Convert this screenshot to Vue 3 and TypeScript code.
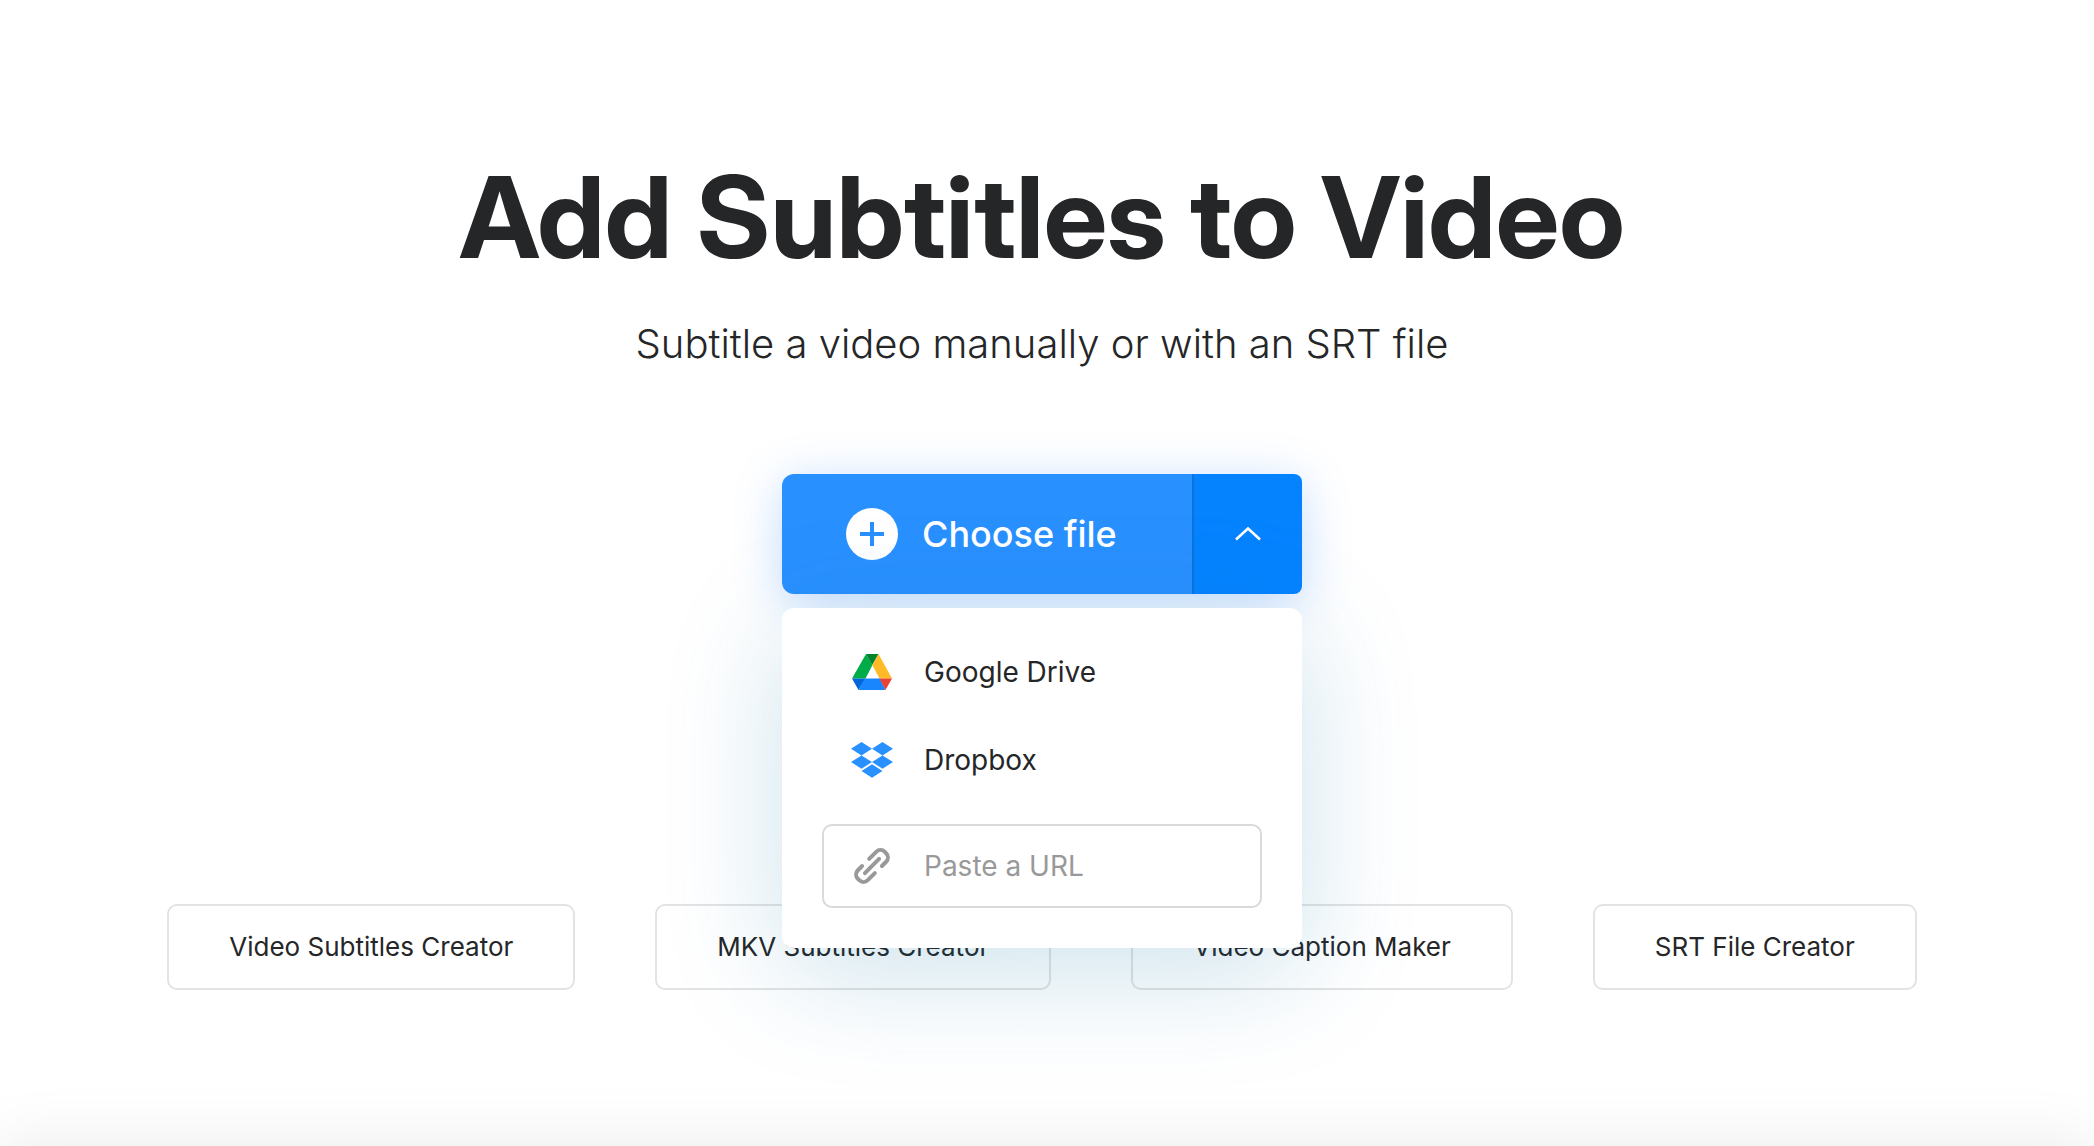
<script setup lang="ts">
import { ref } from 'vue'

const open = ref(true)
const url = ref('')
const related: string[] = [
  'Video Subtitles Creator',
  'MKV Subtitles Creator',
  'Video Caption Maker',
  'SRT File Creator',
]
</script>

<template>
  <main class="hero">
    <h1 class="title">Add Subtitles to Video</h1>
    <p class="subtitle">Subtitle a video manually or with an SRT file</p>

    <div class="picker">
      <div class="split">
        <button type="button" class="choose">
          <svg class="plus" viewBox="0 0 52 52" aria-hidden="true">
            <circle cx="26" cy="26" r="26" fill="#fff" />
            <path d="M26 14v24M14 26h24" stroke="#2990ff" stroke-width="4" />
          </svg>
          <span>Choose file</span>
        </button>
        <button
          type="button"
          class="toggle"
          aria-label="More sources"
          :aria-expanded="open"
          @click="open = !open"
        >
          <svg class="chevron" viewBox="0 0 28 16" aria-hidden="true">
            <path d="M2 13.500L14 2.500l12 11" fill="none" stroke="#fff" stroke-width="2.6" />
          </svg>
        </button>
      </div>

      <div v-if="open" class="menu">
        <button type="button" class="source">
          <svg class="icon" viewBox="0 0 42 36" aria-hidden="true">
            <path d="M15 0L1 24.500h13.500L21.500 11z" fill="#00ac47" />
            <path d="M15 0h12.500L21.300 11z" fill="#00832d" />
            <path d="M27.500 0L41 24.500H28.500L21.300 11z" fill="#ffba26" />
            <path d="M1 24.500h13.500L7.500 36z" fill="#0066da" />
            <path d="M14 24.500h15L34.500 36h-27z" fill="#1a86fd" />
            <path d="M28.500 24.500H41L34.500 36z" fill="#ea4335" />
          </svg>
          <span>Google Drive</span>
        </button>
        <button type="button" class="source">
          <svg class="icon" viewBox="0 0 42 36" aria-hidden="true">
            <path
              fill="#2990ff"
              d="M10.500 0L21 6.700 10.500 13.400 0 6.700zM31.500 0L42 6.700 31.500 13.400 21 6.700zM10.500 13.400L21 20.100 10.500 26.800 0 20.100zM31.500 13.400L42 20.100 31.500 26.800 21 20.100zM21 22.300L31.500 29 21 35.700 10.500 29z"
            />
          </svg>
          <span>Dropbox</span>
        </button>
        <label class="url">
          <svg class="icon" viewBox="0 0 42 36" aria-hidden="true">
            <g
              transform="translate(21 18) rotate(-45)"
              fill="none"
              stroke="#999"
              stroke-width="4"
              stroke-linecap="round"
            >
              <path d="M-10 0H10" />
              <path d="M3 -7H13a6 6 0 0 1 6 6v2a6 6 0 0 1 -6 6H7" />
              <path d="M-3 7H-13a6 6 0 0 1 -6 -6v-2a6 6 0 0 1 6 -6H-7" />
            </g>
          </svg>
          <input v-model="url" type="text" placeholder="Paste a URL" aria-label="Paste a URL" />
        </label>
      </div>
    </div>

    <nav class="related" aria-label="Related tools">
      <a v-for="name in related" :key="name" href="#" class="pill">{{ name }}</a>
    </nav>
  </main>
</template>

<style>
body {
  margin: 0;
  background: #fff;
}
</style>

<style scoped>
.hero {
  position: relative;
  box-sizing: border-box;
  min-height: 100vh;
  padding: 147px 10px 120px 0;
  overflow: hidden;
  display: flex;
  flex-direction: column;
  align-items: center;
  font-family: Inter, 'Liberation Sans', sans-serif;
  color: #252628;
}

.hero::after {
  content: '';
  position: absolute;
  top: 100%;
  left: 0;
  right: 0;
  height: 200px;
  box-shadow: 0 0 64px rgba(0, 0, 0, 0.09);
}

.title {
  margin: 0;
  font-family: 'Inter Display', Inter, 'Liberation Sans', sans-serif;
  font-size: 113px;
  line-height: 140px;
  font-weight: 700;
}

.subtitle {
  margin: 29px 0 0;
  font-size: 40px;
  line-height: 56px;
  font-weight: 300;
}

.picker {
  position: relative;
  width: 520px;
  margin-top: 102px;
}

.split {
  display: flex;
  height: 120px;
  border-radius: 12px;
  box-shadow: 0 8px 48px rgba(41, 130, 255, 0.28);
}

button {
  margin: 0;
  border: 0;
  font: inherit;
  cursor: pointer;
}

.choose {
  flex: 1;
  display: flex;
  align-items: center;
  gap: 24px;
  padding: 0 0 0 64px;
  background: #2990ff;
  border-radius: 12px 0 0 12px;
  color: #fff;
  font-size: 36px;
  font-weight: 500;
}

.plus {
  width: 52px;
  height: 52px;
}

.toggle {
  display: flex;
  align-items: center;
  justify-content: center;
  box-sizing: border-box;
  width: 110px;
  padding: 0;
  background: #0583ff;
  border-left: 2px solid #0a74dc;
  border-radius: 0 8px 8px 0;
}

.chevron {
  width: 28px;
  height: 16px;
}

.menu {
  position: absolute;
  top: 134px;
  left: 0;
  right: 0;
  box-sizing: border-box;
  padding: 20px 40px 40px;
  background: #fff;
  border-radius: 12px;
  box-shadow: 0 24px 120px rgba(0, 110, 160, 0.2);
}

.source {
  display: flex;
  align-items: center;
  gap: 31px;
  width: 100%;
  height: 88px;
  padding: 0 29px;
  background: none;
  color: #252628;
  font-size: 28px;
}

.icon {
  flex: none;
  width: 42px;
  height: 36px;
  overflow: visible;
}

.url {
  display: flex;
  align-items: center;
  gap: 31px;
  box-sizing: border-box;
  height: 84px;
  margin-top: 20px;
  padding: 0 27px;
  border: 2px solid #d9d9d9;
  border-radius: 10px;
}

.url input {
  flex: 1;
  min-width: 0;
  padding: 0;
  border: 0;
  outline: 0;
  background: none;
  font: inherit;
  font-size: 28px;
  color: #252628;
}

.url input::placeholder {
  color: #999;
  opacity: 1;
}

.related {
  display: flex;
  justify-content: center;
  gap: 80px;
  margin-top: 310px;
}

.pill {
  padding: 21px 60px;
  border: 2px solid #e3e3e3;
  border-radius: 10px;
  color: #252628;
  font-size: 26px;
  line-height: 40px;
  text-decoration: none;
  white-space: nowrap;
}
</style>
